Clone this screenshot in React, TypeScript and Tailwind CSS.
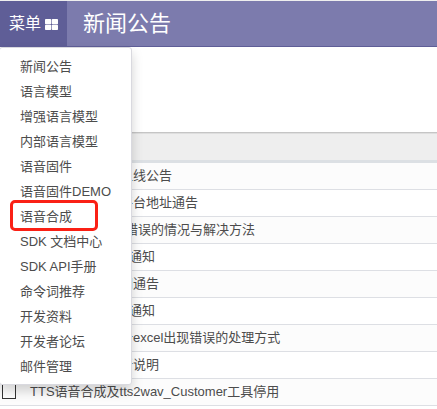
const menuItems = [
  '新闻公告',
  '语言模型',
  '增强语言模型',
  '内部语言模型',
  '语音固件',
  '语音固件DEMO',
  '语音合成',
  'SDK 文档中心',
  'SDK API手册',
  '命令词推荐',
  '开发资料',
  '开发者论坛',
  '邮件管理',
];

const rows = [
  { text: '上线公告', indent: 'pl-[98px]' },
  { text: '平台地址通告', indent: 'pl-[98px]' },
  { text: '错误的情况与解决方法', indent: 'pl-[103px]' },
  { text: '通知', indent: 'pl-[107px]' },
  { text: '间通告', indent: 'pl-[98px]' },
  { text: '通知', indent: 'pl-[107px]' },
  { text: '析excel出现错误的处理方式', indent: 'pl-[98px]' },
  { text: '新说明', indent: 'pl-[98px]' },
  { text: 'TTS语音合成及tts2wav_Customer工具停用', indent: 'pl-2' },
];

function GridIcon() {
  return (
    <svg className="mt-[2px] h-[11px] w-[13px]" viewBox="0 0 13 11" fill="currentColor" aria-hidden="true">
      <rect x="0" y="0" width="6.2" height="5.2" rx="0.8" />
      <rect x="6.8" y="0" width="6.2" height="5.2" rx="0.8" />
      <rect x="0" y="5.8" width="6.2" height="5.2" rx="0.8" />
      <rect x="6.8" y="5.8" width="6.2" height="5.2" rx="0.8" />
    </svg>
  );
}

function Menu() {
  return (
    <ul className="absolute top-[47px] left-[-1px] h-[338px] w-[133px] rounded-[3px] border border-[#d9d9df] bg-white py-[5px] shadow-[0_6px_12px_rgba(0,0,0,0.175)]">
      {menuItems.map((item) => (
        <li key={item} className="flex h-[25px] items-center pt-[3px] pl-5 whitespace-nowrap">
          <span className="relative">
            {item}
            {item === '语音合成' && (
              <span className="absolute top-[-8px] left-[-10px] h-[31px] w-[88px] rounded-[5px] border-[3px] border-[#fa2015]" />
            )}
          </span>
        </li>
      ))}
    </ul>
  );
}

export default function App() {
  return (
    <div className="relative h-[409px] w-[437px] overflow-hidden bg-white font-['Liberation_Sans','Noto_Sans_CJK_SC',sans-serif] text-[13px] leading-[18px] text-[#4c4c4c]">
      <header className="flex h-[47px] border-t border-b border-t-[#eeeeee] border-b-[#5f5e97] bg-[#7c7bad] text-white">
        <button className="flex w-[67px] items-center gap-1 bg-[#5f5e97] pl-[9px] text-[16px] leading-6">
          <span>菜单</span>
          <GridIcon />
        </button>
        <h1 className="flex items-center pt-px pl-4 text-[22px] leading-8">新闻公告</h1>
      </header>
      <div className="h-[86px] border-b border-[#c5c5c5]" />
      <div className="h-[30px] border-b-[3px] border-[#dce0e4] bg-[#eeeeee] shadow-[inset_0_1px_0_#dedede]" />
      <div>
        {rows.map((row, i) => (
          <div key={i} className="flex h-[27px] items-center border-b border-[#dddfe4] odd:bg-[#fcfcfc]">
            <span className="-mt-px ml-[2px] h-[15px] w-[14px] shrink-0 border border-[#333333] bg-white" />
            <span className={`ml-[6px] whitespace-nowrap ${row.indent}`}>{row.text}</span>
          </div>
        ))}
      </div>
      <Menu />
    </div>
  );
}
